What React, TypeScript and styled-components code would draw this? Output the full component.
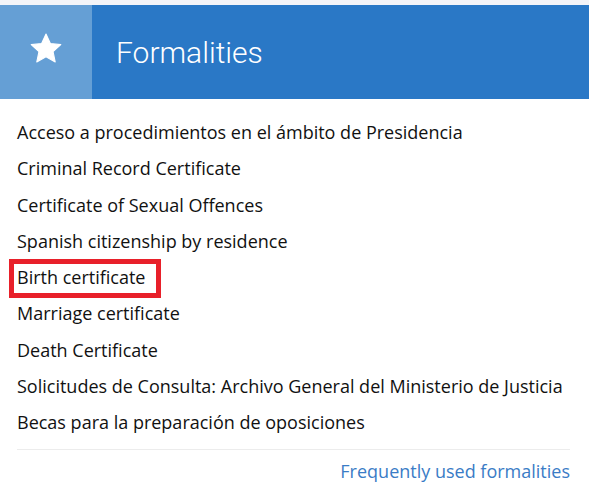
import styled, { createGlobalStyle } from 'styled-components'

const GlobalStyle = createGlobalStyle`
  html, body {
    margin: 0;
    padding: 0;
    background: #ffffff;
  }
  body {
    font-family: "Open Sans", "Liberation Sans", sans-serif;
  }
`

const items = [
  'Acceso a procedimientos en el ámbito de Presidencia',
  'Criminal Record Certificate',
  'Certificate of Sexual Offences',
  'Spanish citizenship by residence',
  'Birth certificate',
  'Marriage certificate',
  'Death Certificate',
  'Solicitudes de Consulta: Archivo General del Ministerio de Justicia',
  'Becas para la preparación de oposiciones',
]

const Page = styled.div`
  width: 589px;
  border-top: 5px solid #f3f4f8;
  background: #ffffff;
`

const Header = styled.header`
  display: flex;
  height: 94px;
  background: #2a78c6;
`

const IconBox = styled.div`
  width: 92px;
  display: flex;
  align-items: center;
  justify-content: center;
  background: #659fd5;
  padding-bottom: 8px;
  box-sizing: border-box;
`

const Title = styled.h2`
  margin: 0;
  display: flex;
  align-items: center;
  padding-left: 24px;
  font-family: Roboto, "Liberation Sans", sans-serif;
  font-weight: 300;
  font-size: 30px;
  color: #ffffff;
`

const Body = styled.div`
  padding: 15px 19px 0 17px;
`

const List = styled.ul`
  list-style: none;
  margin: 0;
  padding: 0;
`

const Item = styled.li<{ $marked?: boolean }>`
  position: relative;
  height: 36.25px;
  display: flex;
  align-items: center;
  font-size: 18px;
  color: #111111;

  &::after {
    content: '';
    display: ${(p) => (p.$marked ? 'block' : 'none')};
    position: absolute;
    left: -8px;
    top: 0;
    width: 152px;
    height: 39px;
    border: 5px solid #e8202a;
    box-sizing: border-box;
  }
`

const Divider = styled.hr`
  margin: 9px 0 0;
  border: 0;
  border-top: 1px solid #ececec;
`

const Footer = styled.div`
  display: flex;
  justify-content: flex-end;
  padding-top: 9px;
`

const MoreLink = styled.a`
  font-size: 18px;
  line-height: 24px;
  color: #3a7cc6;
  text-decoration: none;
`

const Star = () => (
  <svg width="32" height="31" viewBox="0 0 24 23" fill="#ffffff">
    <path d="M12 0.6l3.3 7.1 7.8 0.9-5.8 5.3 1.6 7.7L12 17.7l-6.9 3.9 1.6-7.7L0.9 8.6l7.8-0.9z" strokeLinejoin="round" stroke="#ffffff" strokeWidth="0.8" />
  </svg>
)

export default function App() {
  return (
    <>
      <GlobalStyle />
      <Page>
        <Header>
          <IconBox>
            <Star />
          </IconBox>
          <Title>Formalities</Title>
        </Header>
        <Body>
          <List>
            {items.map((text) => (
              <Item key={text} $marked={text === 'Birth certificate'}>
                {text}
              </Item>
            ))}
          </List>
          <Divider />
          <Footer>
            <MoreLink href="#">Frequently used formalities</MoreLink>
          </Footer>
        </Body>
      </Page>
    </>
  )
}
